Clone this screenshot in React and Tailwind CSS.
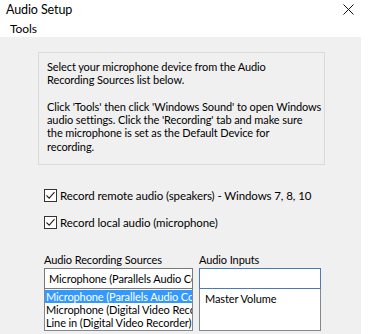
import React from 'react';

const Check = () => (
  <span className="w-[13px] h-[13px] border border-[#333] bg-white flex items-center justify-center shrink-0">
    <svg width="11" height="11" viewBox="0 0 11 11" fill="none">
      <path d="M1.5 5.5 L4.2 8.2 L9.5 2.2" stroke="#222" strokeWidth="1.1" />
    </svg>
  </span>
);

const App = () => {
  const sources = [
    'Microphone (Parallels Audio Controller)',
    'Microphone (Digital Video Recorder)',
    'Line in (Digital Video Recorder)',
  ];

  return (
    <div className="w-[375px] h-[334px] bg-white overflow-hidden flex flex-col text-[11px] tracking-[-0.1px] text-black font-['Lato','Liberation_Sans',sans-serif]">
      {/* Title bar */}
      <div className="h-[19px] flex items-center justify-between pl-[6px] pr-[21px] shrink-0">
        <span className="text-[12.5px] leading-[15px]">Audio Setup</span>
        <svg width="11" height="11" viewBox="0 0 11 11">
          <path d="M0.5 0.5 L10.5 10.5 M10.5 0.5 L0.5 10.5" stroke="#111" strokeWidth="1" />
        </svg>
      </div>

      {/* Menu */}
      <div className="h-[18px] pl-[10px] pt-[2px] leading-[15px] text-[12px] shrink-0">Tools</div>

      {/* Panel */}
      <div className="w-[361px] flex-1 bg-[#f0f0f0] pl-[38px] pt-[15px]">
        <div className="w-[287px] h-[113px] border border-[#dadada] pl-[8px] pt-[7px] leading-[13.3px] whitespace-nowrap">
          <p>
            Select your microphone device from the Audio
            <br />
            Recording Sources list below.
          </p>
          <p className="mt-[13.3px]">
            Click 'Tools' then click 'Windows Sound' to open Windows
            <br />
            audio settings. Click the 'Recording' tab and make sure
            <br />
            the microphone is set as the Default Device for
            <br />
            recording.
          </p>
        </div>

        <div className="pl-[6px] mt-[24px] flex flex-col gap-[14px] text-[11.5px]">
          <label className="flex items-center gap-[3px] h-[13px]">
            <Check />
            <span>Record remote audio (speakers) - Windows 7, 8, 10</span>
          </label>
          <label className="flex items-center gap-[3px] h-[13px]">
            <Check />
            <span>Record local audio (microphone)</span>
          </label>
        </div>

        <div className="pl-[6px] mt-[23px] flex gap-[6px]">
          <div className="w-[149px] flex flex-col">
            <span className="leading-[15px] h-[15px]">Audio Recording Sources</span>
            <div className="mt-[1px] h-[21px] border border-[#7a7a7a] bg-white pl-[4px] leading-[19px] whitespace-nowrap overflow-hidden">
              Microphone (Parallels Audio Controller)
            </div>
            <div className="h-[42px] border border-[#828790] border-t-0 bg-white whitespace-nowrap overflow-hidden">
              {sources.map((s, i) => (
                <div
                  key={s}
                  className={
                    i === 0
                      ? 'h-[13px] leading-[13px] bg-[#3399ff] text-white pl-[1px] mt-[1px] overflow-hidden'
                      : 'h-[13px] leading-[13px] pl-[1px] overflow-hidden'
                  }
                >
                  {s}
                </div>
              ))}
            </div>
          </div>
          <div className="w-[122px] flex flex-col">
            <span className="leading-[15px] h-[15px]">Audio Inputs</span>
            <div className="mt-[1px] h-[21px] border border-[#4a7ab8] bg-white" />
            <div className="h-[42px] border border-[#828790] border-t-0 bg-white pl-[5px] pt-[3px] leading-[13px]">
              Master Volume
            </div>
          </div>
        </div>
      </div>
    </div>
  );
};

export default App;
